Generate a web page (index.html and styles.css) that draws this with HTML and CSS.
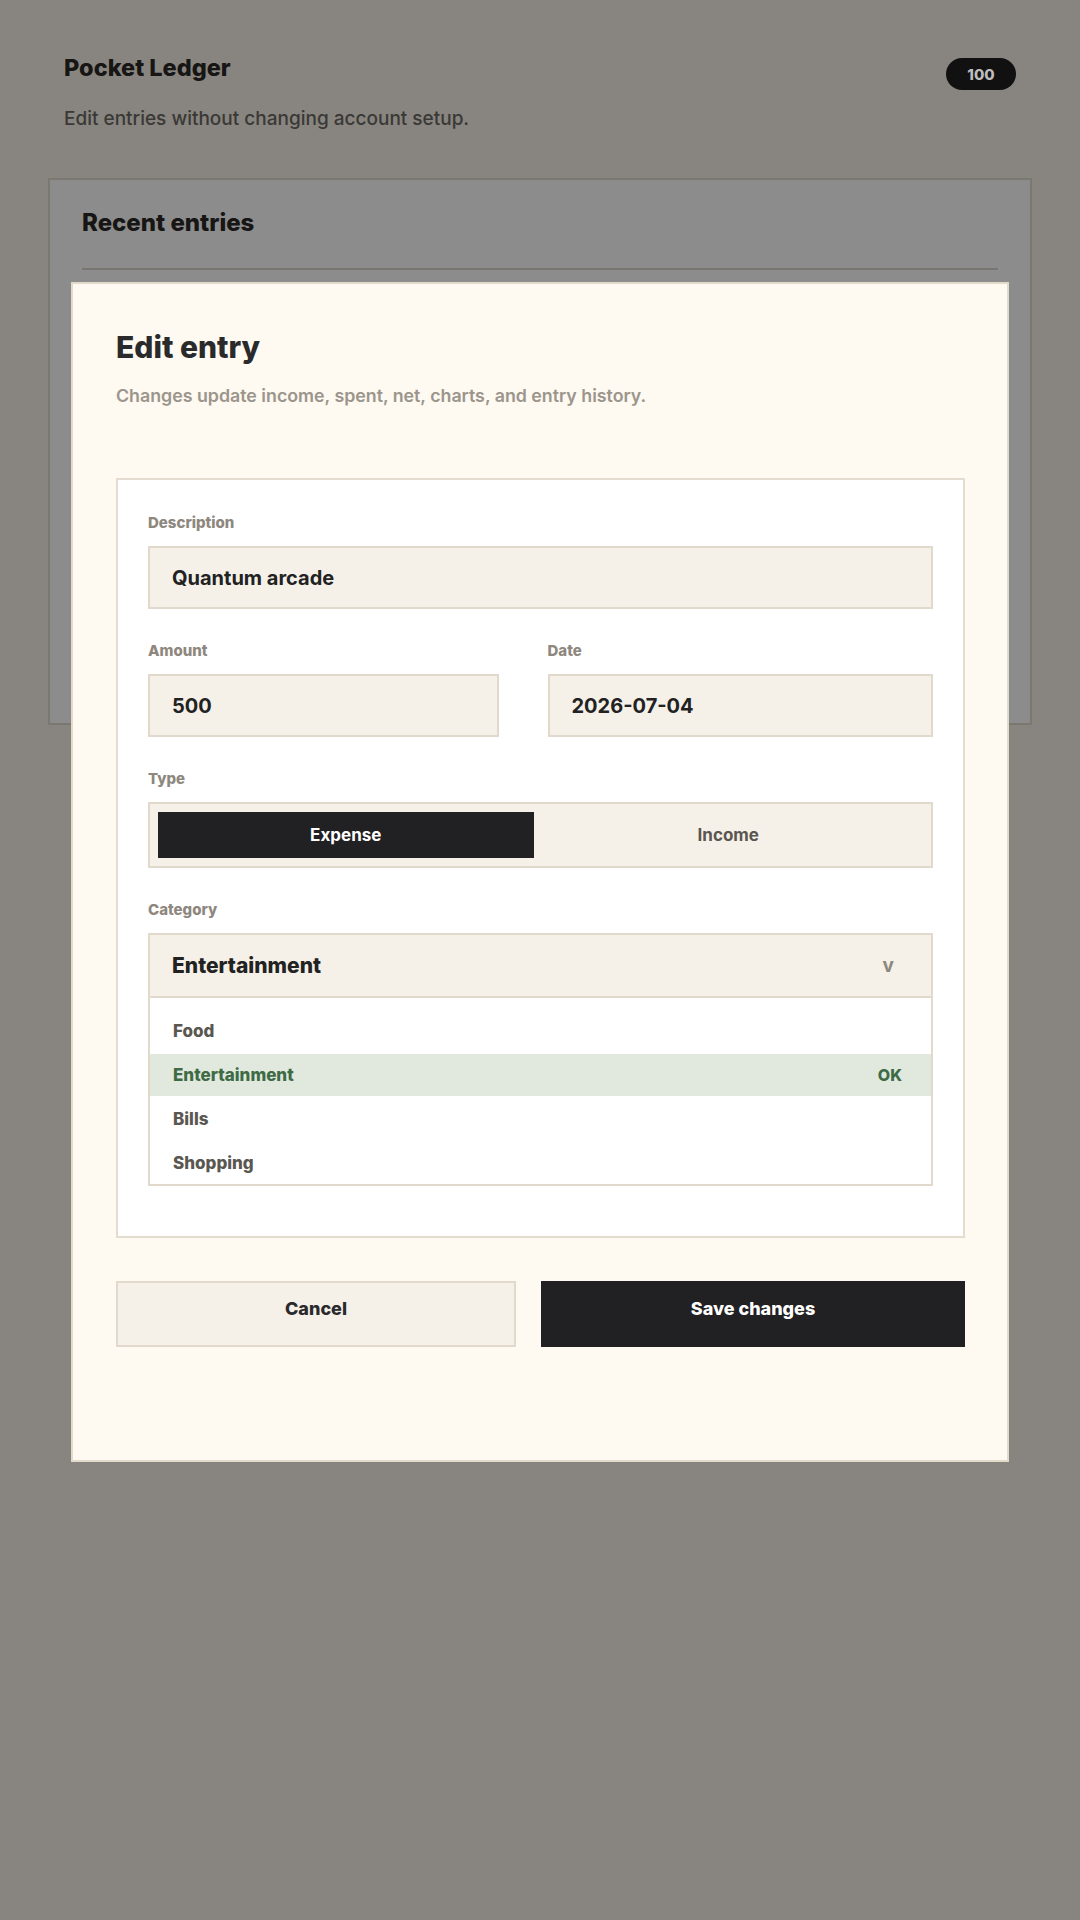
FILE: index.html
```html
<!DOCTYPE html>
<html lang="en">
<head>
    <meta charset="UTF-8">
    <meta name="viewport" content="width=device-width, initial-scale=1.0">
    <title>Pocket Ledger</title>
    <link rel="stylesheet" href="styles.css">
</head>
<body>
    <div class="page">
        <header class="top">
            <div class="top-row">
                <h1 class="brand">Pocket Ledger</h1>
                <span class="badge">100</span>
            </div>
            <p class="tagline">Edit entries without changing account setup.</p>
        </header>

        <section class="panel">
            <h2 class="panel-title">Recent entries</h2>
            <div class="panel-rule"></div>
        </section>
    </div>

    <div class="backdrop">
        <div class="modal">
            <h2 class="modal-title">Edit entry</h2>
            <p class="modal-sub">Changes update income, spent, net, charts, and entry history.</p>

            <form class="form-card">
                <div class="field">
                    <label class="field-label">Description</label>
                    <input type="text" class="input" value="Quantum arcade">
                </div>

                <div class="row">
                    <div class="field">
                        <label class="field-label">Amount</label>
                        <input type="text" class="input" value="500">
                    </div>
                    <div class="field">
                        <label class="field-label">Date</label>
                        <input type="text" class="input" value="2026-07-04">
                    </div>
                </div>

                <div class="field">
                    <label class="field-label">Type</label>
                    <div class="seg">
                        <button type="button" class="seg-btn on">Expense</button>
                        <button type="button" class="seg-btn">Income</button>
                    </div>
                </div>

                <div class="field">
                    <label class="field-label">Category</label>
                    <div class="select">
                        <span>Entertainment</span>
                        <span class="caret">v</span>
                    </div>
                    <ul class="options">
                        <li class="option">Food</li>
                        <li class="option on">Entertainment <span class="ok">OK</span></li>
                        <li class="option">Bills</li>
                        <li class="option">Shopping</li>
                    </ul>
                </div>
            </form>

            <div class="actions">
                <button class="btn btn-cancel">Cancel</button>
                <button class="btn btn-save">Save changes</button>
            </div>
        </div>
    </div>
</body>
</html>
```

FILE: styles.css
```css
body {
    margin: 0;
    min-height: 1920px;
    font-family: Inter, "Noto Sans", sans-serif;
    background: #f7f2e9;
    color: #2a2826;
}
.page {
    padding: 54px 64px 0;
}
.top-row {
    display: flex;
    justify-content: space-between;
    align-items: flex-start;
}
.brand {
    margin: 0;
    font-size: 23.5px;
    line-height: 28px;
    font-weight: 800;
}
.badge {
    position: relative;
    z-index: 20;
    margin-top: 4px;
    width: 70px;
    height: 32px;
    border-radius: 16px;
    background: #111;
    color: #bdbdbd;
    font-size: 15px;
    font-weight: 800;
    display: flex;
    align-items: center;
    justify-content: center;
}
.tagline {
    margin: 16px 0 0;
    font-size: 19px;
    line-height: 26px;
    font-weight: 500;
    color: #6b6862;
}
.panel {
    margin: 46px -16px 0;
    height: 547px;
    box-sizing: border-box;
    background: #fff;
    border: 2px solid #e0dacc;
    padding: 28px 32px 0;
}
.panel-title {
    margin: 0 0 30px;
    font-size: 24px;
    line-height: 30px;
    font-weight: 800;
}
.panel-rule {
    height: 2px;
    background: #dcd7ce;
}

/* modal */
.backdrop {
    position: fixed;
    inset: 0;
    z-index: 10;
    background: rgba(0, 0, 0, 0.45);
    display: flex;
    justify-content: center;
    align-items: flex-start;
    padding-top: 282px;
}
.modal {
    width: 938px;
    box-sizing: border-box;
    background: #fef9f1;
    border: 2px solid #e2dacb;
    padding: 45px 42px 113px 43px;
}
.modal-title {
    margin: 0 0 18px;
    font-size: 30px;
    line-height: 36px;
    font-weight: 800;
    color: #2a2a2c;
}
.modal-sub {
    margin: 0 0 70px;
    font-size: 17.8px;
    line-height: 25px;
    font-weight: 600;
    color: #9b958c;
}
.form-card {
    margin: 0;
    background: #fff;
    border: 2px solid #e3dccf;
    padding: 33px 30px 50px;
    display: flex;
    flex-direction: column;
    gap: 32px;
}
.field-label {
    display: block;
    margin-bottom: 13px;
    font-size: 15px;
    line-height: 20px;
    font-weight: 800;
    color: #8e877e;
}
.input {
    display: block;
    width: 100%;
    height: 63px;
    box-sizing: border-box;
    margin: 0;
    border: 2px solid #e0d9cc;
    border-radius: 0;
    background: #f5f1e9;
    padding: 0 22px;
    font-family: inherit;
    font-size: 20px;
    font-weight: 700;
    color: #222;
    outline: none;
}
.row {
    display: grid;
    grid-template-columns: 351fr 386fr;
    column-gap: 49px;
}
.seg {
    display: grid;
    grid-template-columns: 376fr 390fr;
    height: 66px;
    box-sizing: border-box;
    border: 2px solid #e0d9cc;
    background: #f5f1e9;
    padding: 8px;
}
.seg-btn {
    border: 0;
    border-radius: 0;
    background: transparent;
    font-family: inherit;
    font-size: 17px;
    font-weight: 700;
    color: #5b5650;
    cursor: pointer;
}
.seg-btn.on {
    background: #212023;
    color: #fff;
}
.select {
    height: 65px;
    box-sizing: border-box;
    border: 2px solid #e0d9cc;
    background: #f5f1e9;
    padding: 0 37px 0 22px;
    display: flex;
    justify-content: space-between;
    align-items: center;
    font-size: 21px;
    font-weight: 800;
    color: #222;
}
.caret {
    font-size: 19px;
    font-weight: 700;
    color: #8e877e;
}
.options {
    list-style: none;
    margin: 0;
    padding: 12px 0 0;
    border: 2px solid #e0d9cc;
    border-top: 0;
    display: flex;
    flex-direction: column;
    gap: 2px;
}
.option {
    height: 42px;
    display: flex;
    align-items: center;
    justify-content: space-between;
    padding: 0 29px 0 23px;
    font-size: 17px;
    font-weight: 800;
    color: #5a5650;
}
.option.on {
    background: #e1e9de;
    color: #3e6b46;
}
.ok {
    font-size: 16px;
}
.actions {
    display: grid;
    grid-template-columns: 400fr 424fr;
    column-gap: 25px;
    margin-top: 43px;
}
.btn {
    height: 66px;
    box-sizing: border-box;
    border: 2px solid #e0d9cc;
    border-radius: 0;
    padding: 14px 0 26px;
    font-family: inherit;
    font-size: 18px;
    line-height: 24px;
    font-weight: 800;
    cursor: pointer;
}
.btn-cancel {
    background: #f5f1e9;
    color: #2a2a2c;
}
.btn-save {
    background: #212023;
    border-color: #212023;
    color: #fff;
}
```
